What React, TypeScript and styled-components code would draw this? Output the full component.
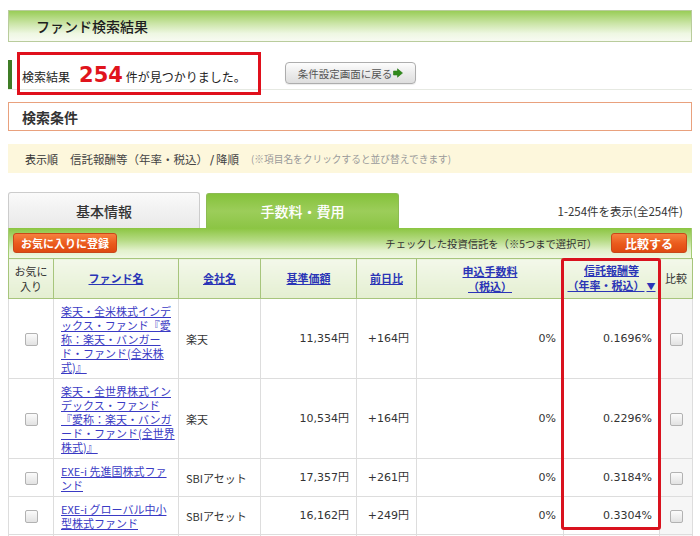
import React from 'react';
import styled, { createGlobalStyle } from 'styled-components';

const GlobalStyle = createGlobalStyle`
  html, body { margin: 0; padding: 0; background: #ffffff; }
  body {
    font-family: "DejaVu Sans", "Noto Sans CJK JP", sans-serif;
    color: #333333;
    font-size: 11px;
  }
  * { box-sizing: border-box; }
`;

const JP = `"Noto Sans CJK JP", "DejaVu Sans", sans-serif`;

const Page = styled.div`
  width: 700px;
  padding: 10px 8px 0;
`;

const PageTitle = styled.h1`
  margin: 0;
  height: 32px;
  border: 1px solid #b9cc9c;
  background: linear-gradient(#99cd57 0%, #c9e4a4 40%, #eef7e2 75%, #f8fbf2 100%);
  display: flex;
  align-items: center;
  padding-left: 27px;
  font-family: ${JP};
  font-size: 14px;
  font-weight: 500;
  color: #1e1e1e;
`;

const ResultHeading = styled.div`
  margin-top: 10px;
  height: 38px;
  display: flex;
  align-items: flex-end;
  border-bottom: 1px solid #e6e9e2;
`;

const GreenBar = styled.span`
  width: 4px;
  height: 29px;
  background: #3f7d26;
  margin-right: 5px;
`;

const RedBox = styled.div`
  align-self: flex-start;
  width: 244px;
  height: 43px;
  border: 3px solid #e0101c;
  display: flex;
  align-items: center;
  padding: 5px 0 0 2px;
`;

const ResultText = styled.span`
  font-family: ${JP};
  font-size: 12px;
  color: #222222;
  line-height: 26px;
  white-space: nowrap;
`;

const Count = styled.span`
  font-family: "DejaVu Sans", sans-serif;
  font-weight: bold;
  font-size: 21px;
  color: #e0141c;
  margin: 0 3px 0 9px;
`;

const BackButton = styled.button`
  align-self: flex-end;
  margin: 0 0 5px 24px;
  width: 131px;
  height: 22px;
  padding: 0;
  border: 1px solid #adadad;
  border-radius: 4px;
  background: linear-gradient(#fdfdfd, #ececec 50%, #dedede);
  color: #555555;
  font-family: ${JP};
  font-size: 10.5px;
  display: inline-flex;
  align-items: center;
  justify-content: center;
  gap: 1px;
  box-shadow: 0 1px 1px rgba(0, 0, 0, 0.08);
`;

const ConditionBox = styled.div`
  margin-top: 12px;
  height: 29px;
  border: 1px solid #e9a17d;
  display: flex;
  align-items: center;
  padding-left: 13px;
  font-family: ${JP};
  font-size: 14px;
  font-weight: bold;
  color: #333333;
`;

const SortBar = styled.div`
  margin-top: 13px;
  height: 29px;
  background: #fdf7dc;
  display: flex;
  align-items: center;
  padding-left: 17px;
  font-family: ${JP};
  font-size: 11px;
  color: #333333;
  white-space: nowrap;
`;

const SortValue = styled.span`
  margin-left: 12px;
  font-size: 11.5px;
  color: #444444;
`;

const Slash = styled.span`
  display: inline-block;
  margin: 0 2px;
  font-family: "DejaVu Sans", sans-serif;
  font-size: 12px;
  color: #444444;
`;

const SortNote = styled.span`
  margin-left: 12px;
  font-size: 9.7px;
  color: #9a9a9a;
`;

const TabRow = styled.div`
  margin-top: 19px;
  height: 36px;
  display: flex;
  align-items: flex-end;
`;

const Tab = styled.div<{ $active?: boolean }>`
  width: ${(p) => (p.$active ? 193 : 192)}px;
  height: ${(p) => (p.$active ? 35 : 36)}px;
  margin-left: ${(p) => (p.$active ? 6 : 0)}px;
  border: 1px solid ${(p) => (p.$active ? '#8cbb52' : '#cccccc')};
  border-bottom: none;
  border-radius: 3px 3px 0 0;
  background: ${(p) =>
    p.$active
      ? 'linear-gradient(#85c23b, #9ccd5a 50%, #8cc545)'
      : 'linear-gradient(#fafafa, #f1f1f1 50%, #e9e9e9)'};
  color: ${(p) => (p.$active ? '#ffffff' : '#333333')};
  display: flex;
  align-items: center;
  justify-content: center;
  font-family: ${JP};
  font-size: 14px;
  font-weight: 500;
`;

const RangeText = styled.span`
  margin-left: auto;
  align-self: center;
  padding: 2px 9px 0 0;
  font-size: 11.5px;
  color: #333333;
  font-family: ${JP};
`;

const Toolbar = styled.div`
  height: 30px;
  display: flex;
  align-items: center;
  padding: 0 4px;
  background: linear-gradient(#8bc541 0%, #b4da82 40%, #e2f1cc 75%, #f0f8e3 100%);
  border-left: 1px solid #a3cb72;
  border-right: 1px solid #a3cb72;
`;

const OrangeButton = styled.button`
  height: 20px;
  padding: 0 7px;
  border: 1px solid #c9471a;
  border-radius: 3px;
  background: linear-gradient(#f6813f, #ea5a1c 55%, #de4a10);
  color: #ffffff;
  font-family: ${JP};
  font-weight: bold;
  font-size: 11px;
  white-space: nowrap;
`;

const CompareNote = styled.span`
  margin: 0 14px 0 auto;
  font-family: ${JP};
  font-size: 10.3px;
  color: #333333;
  white-space: nowrap;
`;

const CompareButton = styled(OrangeButton)`
  width: 76px;
  font-size: 12px;
`;

const TableWrap = styled.div`
  position: relative;
`;

const Highlight = styled.div`
  position: absolute;
  left: 553px;
  top: 0;
  width: 100px;
  height: 272px;
  border: 3px solid #d9121e;
  border-radius: 3px;
  pointer-events: none;
`;

const Table = styled.table`
  width: 684px;
  border-collapse: collapse;
  table-layout: fixed;
`;

const Col = styled.col<{ $w: number }>`
  width: ${(p) => p.$w}px;
`;

const Th = styled.th`
  height: 40px;
  padding: 0 2px;
  border: 1px solid #a7c57c;
  background: linear-gradient(#f3f8ea, #e4efd1);
  font-family: ${JP};
  font-size: 11px;
  font-weight: normal;
  line-height: 15px;
  color: #333333;
  text-align: center;
  vertical-align: middle;
`;

const HeadLink = styled.a`
  color: #2a34b6;
  font-weight: bold;
  text-decoration: underline;
`;

const SortMark = styled.span`
  font-size: 9px;
  margin-left: 2px;
`;

const Td = styled.td<{ $align?: 'left' | 'right' | 'center'; $shade?: boolean; $jp?: boolean }>`
  padding: 5px 7px 4px;
  border: 1px solid #dddddd;
  font-family: ${(p) => (p.$jp ? JP : `"DejaVu Sans", "Noto Sans CJK JP", sans-serif`)};
  font-size: 11px;
  line-height: 14px;
  color: #333333;
  vertical-align: middle;
  text-align: ${(p) => p.$align || 'left'};
  background: ${(p) => (p.$shade ? '#f6f6f6' : '#ffffff')};
  white-space: nowrap;
`;

const FundLink = styled.a`
  display: block;
  color: #3a3ac4;
  text-decoration: underline;
  line-height: 14px;
`;

const Check = styled.input.attrs({ type: 'checkbox' })`
  appearance: none;
  -webkit-appearance: none;
  display: block;
  margin: 0 auto;
  width: 13px;
  height: 13px;
  border: 1px solid #b2b2b2;
  border-radius: 2px;
  background: linear-gradient(#fbfbfb, #e2e2e2);
`;

const ArrowIcon = () => (
  <svg width="10" height="10" viewBox="0 0 10 10" aria-hidden="true">
    <path d="M0.5 3 H4.5 V0.8 L9.5 5 L4.5 9.2 V7 H0.5 Z" fill="#2f8a1c" stroke="#2a7a18" strokeWidth="0.6" strokeLinejoin="round" />
  </svg>
);

type Fund = {
  name: string[];
  company: string;
  price: string;
  change: string;
  fee: string;
  cost: string;
};

const funds: Fund[] = [
  {
    name: ['楽天・全米株式インデ', 'ックス・ファンド『愛', '称：楽天・バンガー', 'ド・ファンド(全米株', '式)』'],
    company: '楽天',
    price: '11,354円',
    change: '+164円',
    fee: '0%',
    cost: '0.1696%',
  },
  {
    name: ['楽天・全世界株式イン', 'デックス・ファンド', '『愛称：楽天・バンガ', 'ード・ファンド(全世界', '株式)』'],
    company: '楽天',
    price: '10,534円',
    change: '+164円',
    fee: '0%',
    cost: '0.2296%',
  },
  {
    name: ['EXE-i 先進国株式ファ', 'ンド'],
    company: 'SBIアセット',
    price: '17,357円',
    change: '+261円',
    fee: '0%',
    cost: '0.3184%',
  },
  {
    name: ['EXE-i グローバル中小', '型株式ファンド'],
    company: 'SBIアセット',
    price: '16,162円',
    change: '+249円',
    fee: '0%',
    cost: '0.3304%',
  },
  {
    name: ['EXE-i 新興国株式ファ', 'ンド'],
    company: 'SBIアセット',
    price: '12,087円',
    change: '+158円',
    fee: '0%',
    cost: '0.3754%',
  },
];

const widths = [45, 125, 82, 96, 60, 147, 96, 33];

export default function App() {
  return (
    <>
      <GlobalStyle />
      <Page>
        <PageTitle>ファンド検索結果</PageTitle>

        <ResultHeading>
          <GreenBar />
          <RedBox>
            <ResultText>
              検索結果<Count>254</Count>件が見つかりました。
            </ResultText>
          </RedBox>
          <BackButton type="button">
            条件設定画面に戻る
            <ArrowIcon />
          </BackButton>
        </ResultHeading>

        <ConditionBox>検索条件</ConditionBox>

        <SortBar>
          表示順
          <SortValue>
            信託報酬等（年率・税込）<Slash>/</Slash>降順
          </SortValue>
          <SortNote>(※項目名をクリックすると並び替えできます)</SortNote>
        </SortBar>

        <TabRow>
          <Tab>基本情報</Tab>
          <Tab $active>手数料・費用</Tab>
          <RangeText>1-254件を表示(全254件)</RangeText>
        </TabRow>

        <Toolbar>
          <OrangeButton type="button">お気に入りに登録</OrangeButton>
          <CompareNote>チェックした投資信託を（※5つまで選択可）</CompareNote>
          <CompareButton type="button">比較する</CompareButton>
        </Toolbar>

        <TableWrap>
          <Table>
            <colgroup>
              {widths.map((w, i) => (
                <Col key={i} $w={w} />
              ))}
            </colgroup>
            <thead>
              <tr>
                <Th>
                  お気に
                  <br />
                  入り
                </Th>
                <Th>
                  <HeadLink href="#">ファンド名</HeadLink>
                </Th>
                <Th>
                  <HeadLink href="#">会社名</HeadLink>
                </Th>
                <Th>
                  <HeadLink href="#">基準価額</HeadLink>
                </Th>
                <Th>
                  <HeadLink href="#">前日比</HeadLink>
                </Th>
                <Th>
                  <HeadLink href="#">
                    申込手数料
                    <br />
                    （税込）
                  </HeadLink>
                </Th>
                <Th>
                  <HeadLink href="#">
                    信託報酬等
                    <br />
                    （年率・税込）<SortMark>▼</SortMark>
                  </HeadLink>
                </Th>
                <Th>比較</Th>
              </tr>
            </thead>
            <tbody>
              {funds.map((f, i) => (
                <tr key={i}>
                  <Td $align="center">
                    <Check />
                  </Td>
                  <Td $jp>
                    <FundLink href="#">
                      {f.name.map((line, j) => (
                        <React.Fragment key={j}>
                          {j > 0 && <br />}
                          {line}
                        </React.Fragment>
                      ))}
                    </FundLink>
                  </Td>
                  <Td $jp>{f.company}</Td>
                  <Td $align="right">{f.price}</Td>
                  <Td $align="right">{f.change}</Td>
                  <Td $align="right">{f.fee}</Td>
                  <Td $align="right">{f.cost}</Td>
                  <Td $align="center" $shade>
                    <Check />
                  </Td>
                </tr>
              ))}
            </tbody>
          </Table>
          <Highlight />
        </TableWrap>
      </Page>
    </>
  );
}
